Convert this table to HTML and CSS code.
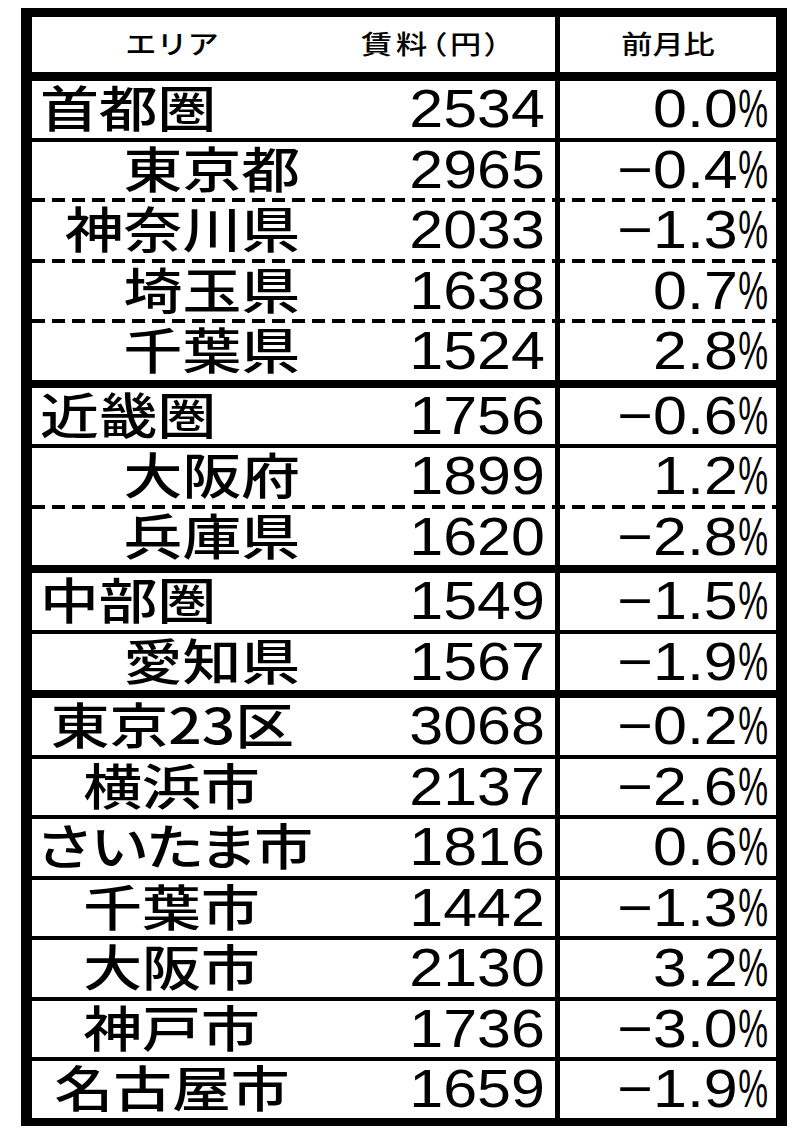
FILE: index.html
```html
<!DOCTYPE html>
<html lang="ja">
<head>
<meta charset="utf-8">
<title>エリア別賃料</title>
<link rel="stylesheet" href="styles.css">
</head>
<body>
<div class="tbl">
  <div class="row head">
    <div class="c area"><span class="w">エリア</span></div>
    <div class="c rent"><span class="w">賃料（円）</span></div>
    <div class="c chg"><span class="w">前月比</span></div>
  </div>

  <div class="row thin">
    <div class="c area region"><span class="w">首都圏</span></div>
    <div class="c rent"><span class="n">2534</span></div>
    <div class="c chg"><span class="n">0.0<span class="pc">%</span></span></div>
  </div>
  <div class="row dash">
    <div class="c area pref"><span class="w">東京都</span></div>
    <div class="c rent"><span class="n">2965</span></div>
    <div class="c chg"><span class="n">−0.4<span class="pc">%</span></span></div>
  </div>
  <div class="row dash">
    <div class="c area pref"><span class="w">神奈川県</span></div>
    <div class="c rent"><span class="n">2033</span></div>
    <div class="c chg"><span class="n">−1.3<span class="pc">%</span></span></div>
  </div>
  <div class="row dash">
    <div class="c area pref"><span class="w">埼玉県</span></div>
    <div class="c rent"><span class="n">1638</span></div>
    <div class="c chg"><span class="n">0.7<span class="pc">%</span></span></div>
  </div>
  <div class="row thick">
    <div class="c area pref"><span class="w">千葉県</span></div>
    <div class="c rent"><span class="n">1524</span></div>
    <div class="c chg"><span class="n">2.8<span class="pc">%</span></span></div>
  </div>

  <div class="row thin">
    <div class="c area region"><span class="w">近畿圏</span></div>
    <div class="c rent"><span class="n">1756</span></div>
    <div class="c chg"><span class="n">−0.6<span class="pc">%</span></span></div>
  </div>
  <div class="row dash">
    <div class="c area pref"><span class="w">大阪府</span></div>
    <div class="c rent"><span class="n">1899</span></div>
    <div class="c chg"><span class="n">1.2<span class="pc">%</span></span></div>
  </div>
  <div class="row thick">
    <div class="c area pref"><span class="w">兵庫県</span></div>
    <div class="c rent"><span class="n">1620</span></div>
    <div class="c chg"><span class="n">−2.8<span class="pc">%</span></span></div>
  </div>

  <div class="row thin">
    <div class="c area region"><span class="w">中部圏</span></div>
    <div class="c rent"><span class="n">1549</span></div>
    <div class="c chg"><span class="n">−1.5<span class="pc">%</span></span></div>
  </div>
  <div class="row thick">
    <div class="c area pref"><span class="w">愛知県</span></div>
    <div class="c rent"><span class="n">1567</span></div>
    <div class="c chg"><span class="n">−1.9<span class="pc">%</span></span></div>
  </div>

  <div class="row thin">
    <div class="c area city"><span class="w">東京23区</span></div>
    <div class="c rent"><span class="n">3068</span></div>
    <div class="c chg"><span class="n">−0.2<span class="pc">%</span></span></div>
  </div>
  <div class="row thin">
    <div class="c area city"><span class="w">横浜市</span></div>
    <div class="c rent"><span class="n">2137</span></div>
    <div class="c chg"><span class="n">−2.6<span class="pc">%</span></span></div>
  </div>
  <div class="row thin">
    <div class="c area city"><span class="w tight">さいたま市</span></div>
    <div class="c rent"><span class="n">1816</span></div>
    <div class="c chg"><span class="n">0.6<span class="pc">%</span></span></div>
  </div>
  <div class="row thin">
    <div class="c area city"><span class="w">千葉市</span></div>
    <div class="c rent"><span class="n">1442</span></div>
    <div class="c chg"><span class="n">−1.3<span class="pc">%</span></span></div>
  </div>
  <div class="row thin">
    <div class="c area city"><span class="w">大阪市</span></div>
    <div class="c rent"><span class="n">2130</span></div>
    <div class="c chg"><span class="n">3.2<span class="pc">%</span></span></div>
  </div>
  <div class="row thin">
    <div class="c area city"><span class="w">神戸市</span></div>
    <div class="c rent"><span class="n">1736</span></div>
    <div class="c chg"><span class="n">−3.0<span class="pc">%</span></span></div>
  </div>
  <div class="row last">
    <div class="c area city"><span class="w">名古屋市</span></div>
    <div class="c rent"><span class="n">1659</span></div>
    <div class="c chg"><span class="n">−1.9<span class="pc">%</span></span></div>
  </div>
</div>
</body>
</html>
```

FILE: styles.css
```css
html, body {
  margin: 0;
  padding: 0;
  background: #fff;
}

body {
  font-family: "Noto Sans CJK JP", "Noto Sans", sans-serif;
  color: #000;
}

.tbl {
  margin: 8px 0 0 21px;
  width: 744px;
  border-style: solid;
  border-color: #000;
  border-width: 9px 11px 8px 11px;
  display: flex;
  flex-direction: column;
  /* vertical divider between 賃料 and 前月比 */
  background:
    linear-gradient(#000, #000) 523px 0 / 5px 100% no-repeat,
    #fff;
}

.row {
  display: grid;
  grid-template-columns: 280px 243px 221px;
  height: 56.5px;
}

.row.head {
  height: 55px;
  border-bottom: 9px solid #000;
}

.row.thin {
  border-bottom: 4px solid #000;
}

.row.thick {
  border-bottom: 8px solid #000;
}

.row.dash {
  padding-bottom: 4px;
  background:
    repeating-linear-gradient(90deg, #000 0 13px, transparent 13px 20px)
    left bottom / 100% 4px no-repeat;
}

.c {
  display: flex;
  align-items: center;
  line-height: 1;
  overflow: visible;
  white-space: nowrap;
}

.c.chg {
  padding-left: 5px;
}

.w {
  display: inline-block;
  font-size: 49px;
  font-weight: 500;
  margin-bottom: 8px;
  transform: scaleX(1.2);
}

.w.tight {
  letter-spacing: -3px;
}

.head .c {
  justify-content: center;
}

.head .w {
  font-size: 26px;
  margin-bottom: 4px;
}

.head .rent .w {
  margin-left: 8px;
  font-feature-settings: "palt";
  letter-spacing: 3px;
}

.area.region {
  justify-content: flex-start;
  padding-left: 8px;
}

.area.region .w {
  transform-origin: left center;
}

.area.pref {
  justify-content: flex-end;
  padding-right: 12px;
}

.area.pref .w {
  transform-origin: right center;
}

.area.city {
  justify-content: center;
}

.area.city .w {
  transform-origin: center center;
}

.rent, .row .chg {
  justify-content: flex-end;
}

.head .rent, .head .chg {
  justify-content: center;
}

.rent {
  padding-right: 10px;
}

.row .chg {
  padding-right: 8px;
}

.head .chg {
  padding-right: 0;
}

.n {
  display: inline-block;
  font-family: "Liberation Sans", Arial, sans-serif;
  font-size: 53px;
  margin-bottom: 2px;
  transform: scaleX(1.15);
  transform-origin: right center;
}

.pc {
  display: inline-block;
  width: 0.49em;
  transform: scaleX(0.55);
  transform-origin: left center;
}
```
